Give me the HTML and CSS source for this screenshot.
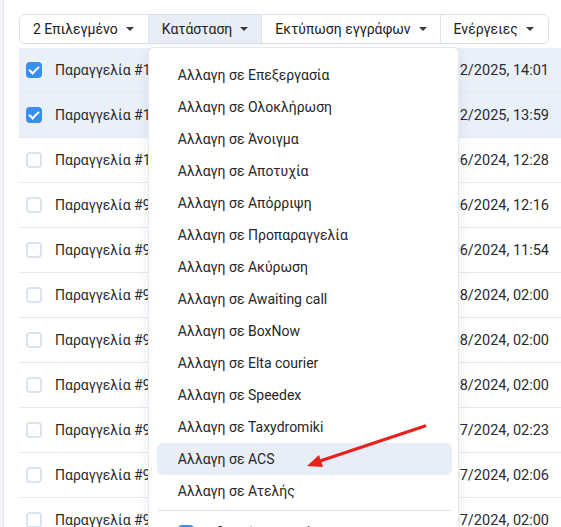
FILE: index.html
```html
<!DOCTYPE html>
<html lang="el">
<head>
    <meta charset="UTF-8">
    <meta name="viewport" content="width=device-width, initial-scale=1.0">
    <title>Παραγγελίες</title>
    <link rel="stylesheet" href="styles.css">
</head>
<body>
    <div class="panel">
        <div class="btn-group">
            <button class="btn">2 Επιλεγμένο <span class="caret"></span></button>
            <div class="dropdown">
                <button class="btn active">Κατάσταση <span class="caret"></span></button>
                <div class="menu">
                    <div class="menu-item">Αλλαγη σε Επεξεργασία</div>
                    <div class="menu-item">Αλλαγη σε Ολοκλήρωση</div>
                    <div class="menu-item">Αλλαγη σε Άνοιγμα</div>
                    <div class="menu-item">Αλλαγη σε Αποτυχία</div>
                    <div class="menu-item">Αλλαγη σε Απόρριψη</div>
                    <div class="menu-item">Αλλαγη σε Προπαραγγελία</div>
                    <div class="menu-item">Αλλαγη σε Ακύρωση</div>
                    <div class="menu-item">Αλλαγη σε Awaiting call</div>
                    <div class="menu-item">Αλλαγη σε BoxNow</div>
                    <div class="menu-item">Αλλαγη σε Elta courier</div>
                    <div class="menu-item">Αλλαγη σε Speedex</div>
                    <div class="menu-item">Αλλαγη σε Taxydromiki</div>
                    <div class="menu-item hover">Αλλαγη σε ACS</div>
                    <div class="menu-item">Αλλαγη σε Ατελής</div>
                    <div class="menu-divider"></div>
                    <label class="menu-check"><span class="check checked"></span>Ειδοποίηση πελάτη</label>
                </div>
            </div>
            <button class="btn">Εκτύπωση εγγράφων <span class="caret"></span></button>
            <button class="btn">Ενέργειες <span class="caret"></span></button>
        </div>

        <div class="orders">
            <div class="row selected"><span class="check checked"></span><span class="order">Παραγγελία #1048</span><span class="date">18/12/2025, 14:01</span></div>
            <div class="row selected"><span class="check checked"></span><span class="order">Παραγγελία #1047</span><span class="date">18/12/2025, 13:59</span></div>
            <div class="row"><span class="check"></span><span class="order">Παραγγελία #1046</span><span class="date">20/06/2024, 12:28</span></div>
            <div class="row"><span class="check"></span><span class="order">Παραγγελία #998</span><span class="date">20/06/2024, 12:16</span></div>
            <div class="row"><span class="check"></span><span class="order">Παραγγελία #997</span><span class="date">20/06/2024, 11:54</span></div>
            <div class="row"><span class="check"></span><span class="order">Παραγγελία #996</span><span class="date">30/08/2024, 02:00</span></div>
            <div class="row"><span class="check"></span><span class="order">Παραγγελία #995</span><span class="date">30/08/2024, 02:00</span></div>
            <div class="row"><span class="check"></span><span class="order">Παραγγελία #994</span><span class="date">30/08/2024, 02:00</span></div>
            <div class="row"><span class="check"></span><span class="order">Παραγγελία #993</span><span class="date">31/07/2024, 02:23</span></div>
            <div class="row"><span class="check"></span><span class="order">Παραγγελία #992</span><span class="date">31/07/2024, 02:06</span></div>
            <div class="row"><span class="check"></span><span class="order">Παραγγελία #991</span><span class="date">31/07/2024, 02:00</span></div>
        </div>
    </div>

    <!-- red pointer drawn over the menu -->
    <svg class="pointer" width="561" height="527" viewBox="0 0 561 527">
        <line x1="425" y1="426" x2="320" y2="461" stroke="#e8201c" stroke-width="3" stroke-linecap="round"/>
        <polygon points="307,466 319,455 323,467" fill="#e8201c"/>
    </svg>
</body>
</html>
```

FILE: styles.css
```css
body {
    margin: 0;
    font-family: Roboto, "Noto Sans", sans-serif;
    font-size: 14px;
    color: #262626;
    background: #fff;
    position: relative;
    height: 527px;
    overflow: hidden;
    border-left: 3px solid #f2f4f7;
}
.panel {
    border-left: 1px solid #e1e6ee;
    padding: 14px 0 0 15px;
    height: 100%;
}
.btn-group {
    display: inline-flex;
    border: 1px solid #d9e0ea;
    border-radius: 6px;
    height: 30px;
    box-sizing: border-box;
}
.dropdown {
    position: relative;
    display: flex;
}
.btn {
    font: inherit;
    color: #222;
    background: #fff;
    border: none;
    border-left: 1px solid #dfe5ee;
    padding: 0 13px;
    display: flex;
    align-items: center;
    gap: 8px;
    height: 28px;
}
.btn-group > .btn:first-child {
    border-left: none;
    border-radius: 6px 0 0 6px;
    padding-right: 14px;
}
.btn-group > .btn:last-child {
    border-radius: 0 6px 6px 0;
    padding-right: 14px;
}
.btn.active {
    background: #e9eef6;
}
.caret {
    width: 0;
    height: 0;
    border-left: 4px solid transparent;
    border-right: 4px solid transparent;
    border-top: 4px solid #3a3a3a;
}
.menu {
    position: absolute;
    top: 32px;
    left: 0;
    width: 311px;
    box-sizing: border-box;
    background: #fff;
    border: 1px solid #e3e7ee;
    border-radius: 6px;
    box-shadow: 0 4px 14px rgba(30, 40, 60, 0.08);
    padding: 11px 6px 8px 8px;
    z-index: 10;
}
.menu-item {
    height: 32px;
    line-height: 32px;
    padding-left: 21px;
    border-radius: 6px;
    color: #262626;
}
.menu-item.hover {
    background: #e9eef6;
}
.menu-divider {
    height: 1px;
    background: #dfe4ec;
    margin: 3px 1px 6px;
}
.menu-check {
    display: flex;
    align-items: center;
    gap: 10px;
    padding-left: 21px;
    height: 32px;
}
.orders {
    margin-top: 4px;
}
.row {
    display: flex;
    align-items: center;
    height: 44px;
    border-bottom: 1px solid #e4e8ef;
}
.row.selected {
    background: #eaf0f8;
}
.check {
    width: 16px;
    height: 16px;
    box-sizing: border-box;
    border: 2px solid #dde3ec;
    border-radius: 4px;
    background: #fff;
    margin-left: 7px;
    flex-shrink: 0;
    position: relative;
}
.menu-check .check {
    margin-left: 0;
}
.check.checked {
    background: #3a8ef0;
    border-color: #3a8ef0;
}
.check.checked::after {
    content: "";
    position: absolute;
    left: 3px;
    top: 0px;
    width: 4px;
    height: 8px;
    border: solid #fff;
    border-width: 0 2px 2px 0;
    transform: rotate(45deg);
}
.order {
    margin-left: 13px;
    color: #2b2b2b;
}
.date {
    margin-left: auto;
    padding-right: 12px;
    font-size: 14.5px;
    color: #2b2b2b;
}
.pointer {
    position: absolute;
    top: 0;
    left: -3px;
    pointer-events: none;
    z-index: 20;
}
```
